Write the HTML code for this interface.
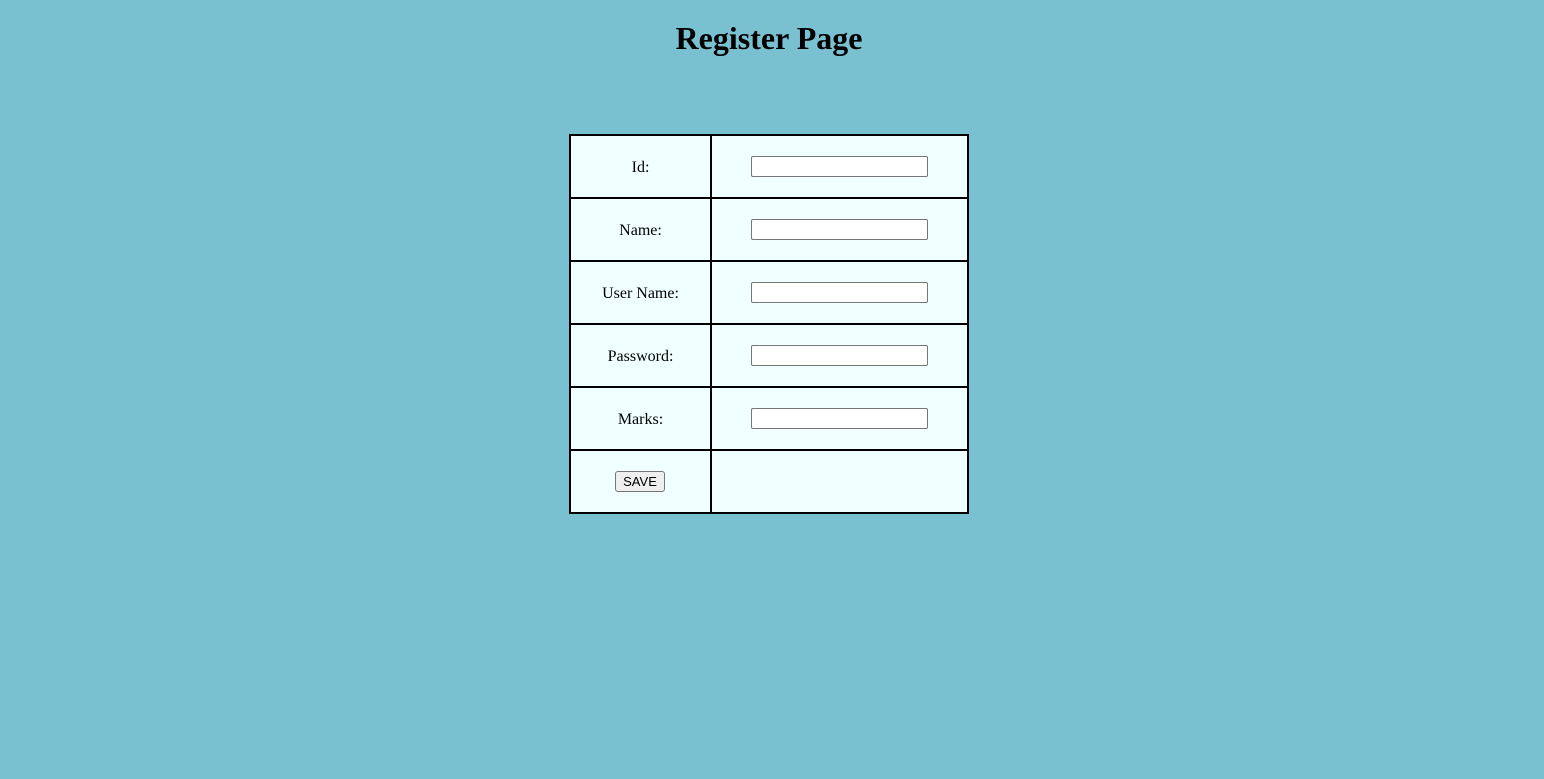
<!DOCTYPE html>
<html><head><style>
html,body{margin:0;padding:0;width:1544px;height:779px;background:#79c0d1;overflow:hidden;font-family:"Liberation Serif",serif;}
h1{position:absolute;top:19px;left:0;width:1538px;margin:0;text-align:center;font-size:32px;font-weight:bold;line-height:38px;}
.c{position:absolute;background:#f0ffff;border:2px solid #000;box-sizing:border-box;}
.l{font-size:16px;display:flex;align-items:center;justify-content:center;padding-top:2px;}
.in{position:absolute;left:751px;width:177px;height:21px;box-sizing:border-box;border:1px solid #767676;border-radius:2px;background:#fff;}
.btn{position:absolute;left:615px;top:471px;width:50px;height:21px;box-sizing:border-box;border:1px solid #767676;border-radius:3px;background:#efefef;font:13px "Liberation Sans",sans-serif;display:flex;align-items:center;justify-content:center;}
</style></head><body>
<h1>Register Page</h1>
<div class="c l" style="left:569px;top:134px;width:143px;height:65px">Id:</div>
<div class="c" style="left:710px;top:134px;width:259px;height:65px"></div>
<div class="c l" style="left:569px;top:197px;width:143px;height:65px">Name:</div>
<div class="c" style="left:710px;top:197px;width:259px;height:65px"></div>
<div class="c l" style="left:569px;top:260px;width:143px;height:65px">User Name:</div>
<div class="c" style="left:710px;top:260px;width:259px;height:65px"></div>
<div class="c l" style="left:569px;top:323px;width:143px;height:65px">Password:</div>
<div class="c" style="left:710px;top:323px;width:259px;height:65px"></div>
<div class="c l" style="left:569px;top:386px;width:143px;height:65px">Marks:</div>
<div class="c" style="left:710px;top:386px;width:259px;height:65px"></div>
<div class="c" style="left:569px;top:449px;width:143px;height:65px"></div>
<div class="c" style="left:710px;top:449px;width:259px;height:65px"></div>
<div class="in" style="top:156px"></div>
<div class="in" style="top:219px"></div>
<div class="in" style="top:282px"></div>
<div class="in" style="top:345px"></div>
<div class="in" style="top:408px"></div>
<div class="btn">SAVE</div>
</body></html>
